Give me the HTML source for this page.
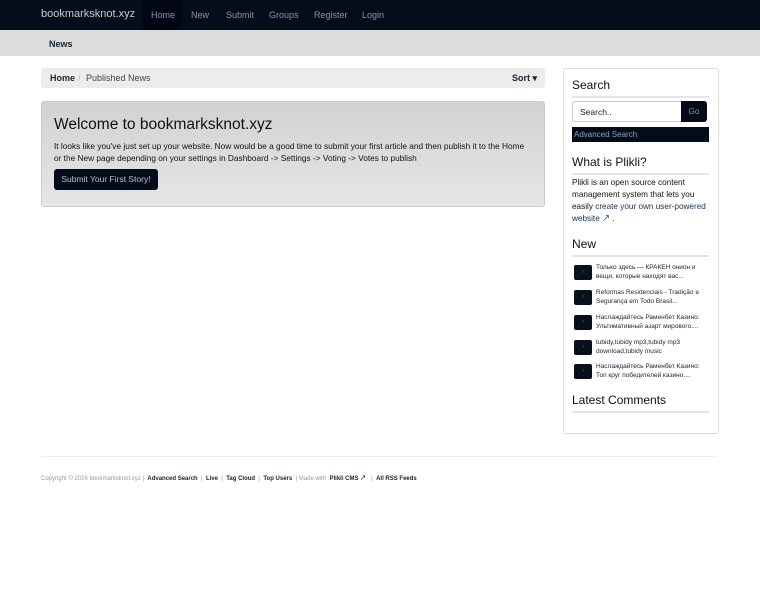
<!DOCTYPE html>
<html><head><meta charset="utf-8"><style>
*{box-sizing:border-box;margin:0;padding:0}
body{width:760px;height:600px;background:#fff;font-family:"Liberation Sans","Noto Sans CJK SC",sans-serif;color:#333;position:relative;overflow:hidden}
.nav{position:absolute;left:0;top:0;width:760px;height:30px;background:#040d1a}
.nav .brand{position:absolute;left:41px;top:8px;font-size:11px;color:#c8ccd2}
.nav .hl{position:absolute;left:143px;top:0;width:38px;height:30px;background:#000712}
.nav a{position:absolute;top:10px;font-size:9px;color:#8b939e}
.sub{position:absolute;left:0;top:30px;width:760px;height:26px;background:#dcdcdc}
.sub span{position:absolute;left:49px;top:9px;font-size:9px;font-weight:bold;color:#1a2330}
.bc{position:absolute;left:41px;top:68px;width:504px;height:20px;background:#ececec;border-radius:3px;font-size:9px}
.box{position:absolute;left:41px;top:101px;width:504px;height:106px;border:1px solid #ccc;border-radius:3px;background:linear-gradient(#d2d2d2,#e6e6e6)}
.box h1{position:absolute;left:12px;top:14px;font-size:15.5px;font-weight:normal;color:#111}
.box p{position:absolute;left:12px;top:38px;width:478px;font-size:8.3px;line-height:12px;color:#111}
.btn{position:absolute;left:12px;top:67px;width:104px;height:21px;background:#030c18;border-radius:3px;color:#b9c0c8;font-size:8.5px;text-align:center;line-height:21px}
.side{position:absolute;left:563px;top:68px;width:156px;height:366px;border:1px solid #ddd;border-radius:3px}
.side h3{position:absolute;left:8px;font-size:12px;font-weight:normal;color:#111}
.hr{position:absolute;left:8px;width:137px;height:2px;background:#e5e5e5}
.item{position:absolute;left:10px;width:140px;font-size:6.5px;line-height:9px;color:#1a2330}
.item b{position:absolute;left:0;top:0;width:18px;height:15px;background:#08101c;border-radius:2px;color:#aaa;font-weight:normal;font-size:5px;text-align:center;line-height:15px}
.item span{position:absolute;left:22px;top:-2px;width:115px}
.foot{position:absolute;left:41px;top:456px;width:677px;height:1px;background:#eee}
.ft{position:absolute;left:41px;top:473px;font-size:6px;color:#999;white-space:nowrap}
.ft b{color:#1a2330}
</style></head><body>
<div class="nav"><div class="hl"></div><span class="brand">bookmarksknot.xyz</span>
<a style="left:151px">Home</a><a style="left:191px">New</a><a style="left:226px">Submit</a><a style="left:269px">Groups</a><a style="left:314px">Register</a><a style="left:362px">Login</a></div>
<div class="sub"><span>News</span></div>
<div class="bc"><b style="position:absolute;left:9px;top:5px;color:#1a2330">Home</b><span style="position:absolute;left:37px;top:5px;color:#bbb">/</span><span style="position:absolute;left:45px;top:5px;color:#444">Published News</span><b style="position:absolute;left:471px;top:5px;color:#1a2330">Sort ▾</b></div>
<div class="box"><h1>Welcome to bookmarksknot.xyz</h1><p>It looks like you've just set up your website. Now would be a good time to submit your first article and then publish it to the Home or the New page depending on your settings in Dashboard -&gt; Settings -&gt; Voting -&gt; Votes to publish</p><div class="btn">Submit Your First Story!</div></div>
<div class="side">
<h3 style="top:9px">Search</h3><div class="hr" style="top:27px"></div>
<div style="position:absolute;left:8px;top:32px;width:110px;height:21px;border:1px solid #ccc;border-radius:3px 0 0 3px;font-size:8.5px;color:#222;padding:5px 7px">Search..</div>
<div style="position:absolute;left:117px;top:32px;width:26px;height:21px;background:#030c18;border-radius:0 3px 3px 0;color:#8a929c;font-size:8px;text-align:center;line-height:21px">Go</div>
<div style="position:absolute;left:8px;top:58px;width:137px;height:15px;background:#030c18;color:#8fa0b8;font-size:8px;line-height:15px;padding-left:2px">Advanced Search</div>
<h3 style="top:86px">What is Plikli?</h3><div class="hr" style="top:104px"></div>
<div style="position:absolute;left:8px;top:108px;width:142px;font-size:8.2px;line-height:12px;color:#111">Plikli is an open source content management system that lets you easily <span style="color:#1a3050">create your own user-powered website</span> ↗ .</div>
<h3 style="top:168px">New</h3><div class="hr" style="top:186px"></div>
<div class="item" style="top:196px"><b>↑</b><span>Только здесь — КРАКЕН онион и вещи, которые находят вас...</span></div>
<div class="item" style="top:221px"><b>↑</b><span>Reformas Residenciais - Tradição e Segurança em Todo Brasil...</span></div>
<div class="item" style="top:246px"><b>↑</b><span>Наслаждайтесь Раменбет Казино: Ультимативный азарт мирового....</span></div>
<div class="item" style="top:271px"><b>↑</b><span>tubidy,tubidy mp3,tubidy mp3 download,tubidy music</span></div>
<div class="item" style="top:295px"><b>↑</b><span>Наслаждайтесь Раменбет Казино: Топ круг победителей казино....</span></div>
<h3 style="top:324px">Latest Comments</h3><div class="hr" style="top:342px"></div>
</div>
<div class="foot"></div>
<div class="ft">Copyright © 2026 bookmarksknot.xyz | &nbsp;<b>Advanced Search</b> &nbsp;| &nbsp;<b>Live</b> &nbsp;| &nbsp;<b>Tag Cloud</b> &nbsp;| &nbsp;<b>Top Users</b> &nbsp;| Made with &nbsp;<b>Plikli CMS ↗</b> &nbsp;&nbsp;| &nbsp;<b>All RSS Feeds</b></div>
</body></html>
